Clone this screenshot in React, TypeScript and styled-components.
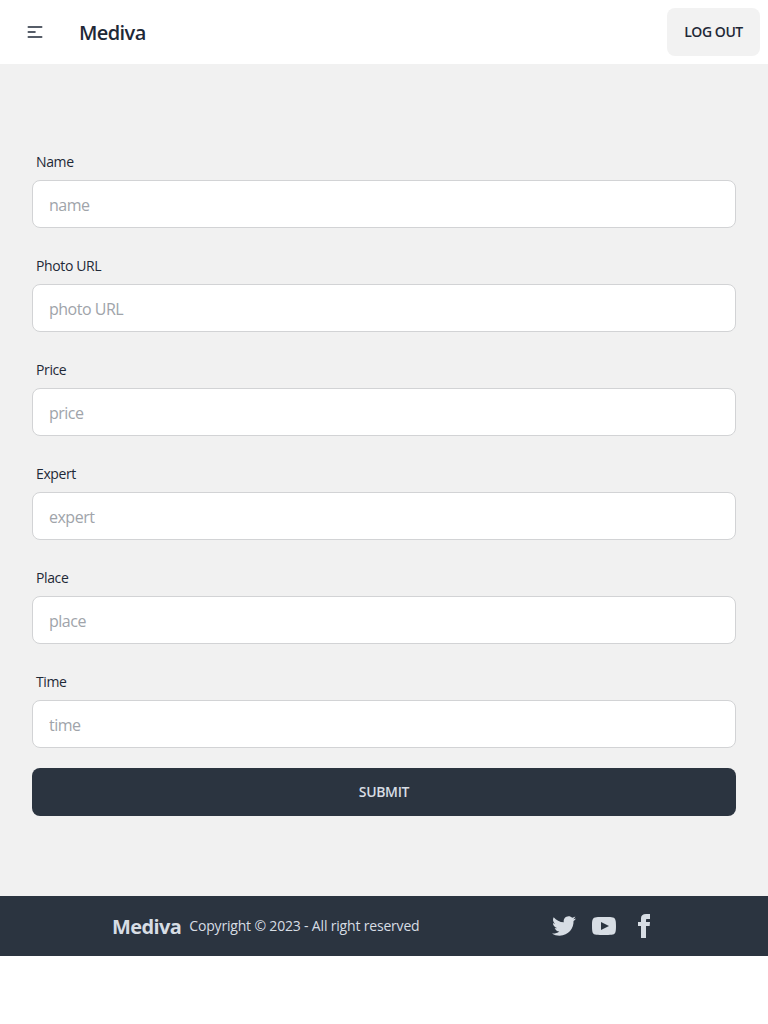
import React from "react";
import styled, { createGlobalStyle } from "styled-components";

const GlobalStyle = createGlobalStyle`
  *, *::before, *::after { box-sizing: border-box; }
  body {
    margin: 0;
    background: #fff;
    color: #1f2937;
    font-family: "Segoe UI", "Open Sans", "Noto Sans", sans-serif;
    font-size: 16px;
    line-height: 24px;
  }
  button, input { font: inherit; }
`;

const Navbar = styled.header`
  display: flex;
  align-items: center;
  justify-content: space-between;
  height: 64px;
  padding: 8px;
  background: #fff;
`;

const NavStart = styled.div`
  display: flex;
  align-items: center;
`;

const MenuButton = styled.button`
  display: flex;
  align-items: center;
  height: 48px;
  padding: 0 17px;
  border: 0;
  background: transparent;
  color: #1f2937;
`;

const Brand = styled.a`
  padding: 2px 17px 0;
  font-size: 20px;
  line-height: 28px;
  font-weight: 600;
  letter-spacing: -0.6px;
`;

const LogoutButton = styled.button`
  width: 93px;
  height: 48px;
  padding: 0;
  border: 0;
  border-radius: 8px;
  background: #f2f2f2;
  color: #1f2937;
  font-size: 14px;
  font-weight: 600;
  letter-spacing: -0.45px;
`;

const Main = styled.main`
  padding: 80px 32px;
  background: #f1f1f1;
`;

const Form = styled.form`
  display: flex;
  flex-direction: column;
`;

const Field = styled.label`
  display: flex;
  flex-direction: column;
  margin-bottom: 20px;
`;

const FieldLabel = styled.span`
  padding: 8px 4px;
  font-size: 14px;
  line-height: 20px;
  letter-spacing: -0.38px;
`;

const TextInput = styled.input`
  width: 100%;
  height: 48px;
  padding: 2px 16px 0;
  border: 1px solid #d2d3d5;
  border-radius: 8px;
  background: #fff;
  outline: none;
  letter-spacing: -0.5px;
  &::placeholder { color: #a0a4aa; opacity: 1; }
`;

const SubmitButton = styled.button`
  height: 48px;
  border: 0;
  border-radius: 8px;
  background: #2b3440;
  color: #d7dde4;
  font-size: 14px;
  font-weight: 600;
  letter-spacing: -0.35px;
`;

const Footer = styled.footer`
  display: flex;
  align-items: center;
  justify-content: space-between;
  height: 60px;
  padding: 0 112px;
  background: #2b3440;
  color: #d7dde4;
`;

const FooterText = styled.div`
  display: flex;
  align-items: center;
  gap: 8px;
`;

const FooterBrand = styled.span`
  padding-top: 2px;
  font-size: 20px;
  line-height: 28px;
  font-weight: 700;
  letter-spacing: -0.6px;
`;

const Copyright = styled.p`
  margin: 0;
  font-size: 14px;
  line-height: 20px;
  letter-spacing: -0.18px;
`;

const Socials = styled.nav`
  display: flex;
  gap: 16px;
`;

const fields = ["Name", "Photo URL", "Price", "Expert", "Place", "Time"];

const socials = [
  {
    name: "Twitter",
    path: "M24 4.557c-.883.392-1.832.656-2.828.775 1.017-.609 1.798-1.574 2.165-2.724-.951.564-2.005.974-3.127 1.195-.897-.957-2.178-1.555-3.594-1.555-3.179 0-5.515 2.966-4.797 6.045-4.091-.205-7.719-2.165-10.148-5.144-1.29 2.213-.669 5.108 1.523 6.574-.806-.026-1.566-.247-2.229-.616-.054 2.281 1.581 4.415 3.949 4.89-.693.188-1.452.232-2.224.084.626 1.956 2.444 3.379 4.6 3.419-2.07 1.623-4.678 2.348-7.29 2.04 2.179 1.397 4.768 2.212 7.548 2.212 9.142 0 14.307-7.721 13.995-14.646.962-.695 1.797-1.562 2.457-2.549z",
  },
  {
    name: "YouTube",
    path: "M19.615 3.184c-3.604-.246-11.631-.245-15.23 0-3.897.266-4.356 2.62-4.385 8.816.029 6.185.484 8.549 4.385 8.816 3.6.245 11.626.246 15.23 0 3.897-.266 4.356-2.62 4.385-8.816-.029-6.185-.484-8.549-4.385-8.816zm-10.615 12.816v-8l8 3.993-8 4.007z",
  },
  {
    name: "Facebook",
    path: "M9 8h-3v4h3v12h5v-12h3.642l.358-4h-4v-1.667c0-.955.192-1.333 1.115-1.333h2.885v-5h-3.808c-3.596 0-5.192 1.583-5.192 4.615v3.385z",
  },
];

export default function App() {
  return (
    <>
      <GlobalStyle />
      <Navbar>
        <NavStart>
          <MenuButton type="button" aria-label="Menu">
            <svg width="20" height="20" viewBox="0 0 24 24" fill="none" stroke="currentColor">
              <path strokeLinecap="round" strokeLinejoin="round" strokeWidth="2" d="M4 6h16M4 12h8m-8 6h16" />
            </svg>
          </MenuButton>
          <Brand>Mediva</Brand>
        </NavStart>
        <LogoutButton type="button">LOG OUT</LogoutButton>
      </Navbar>
      <Main>
        <Form>
          {fields.map((label) => (
            <Field key={label}>
              <FieldLabel>{label}</FieldLabel>
              <TextInput placeholder={label === "Photo URL" ? "photo URL" : label.toLowerCase()} />
            </Field>
          ))}
          <SubmitButton type="button">SUBMIT</SubmitButton>
        </Form>
      </Main>
      <Footer>
        <FooterText>
          <FooterBrand>Mediva</FooterBrand>
          <Copyright>Copyright © 2023 - All right reserved</Copyright>
        </FooterText>
        <Socials>
          {socials.map(({ name, path }) => (
            <svg key={name} width="24" height="24" viewBox="0 0 24 24" fill="currentColor" aria-label={name}>
              <path d={path} />
            </svg>
          ))}
        </Socials>
      </Footer>
    </>
  );
}
